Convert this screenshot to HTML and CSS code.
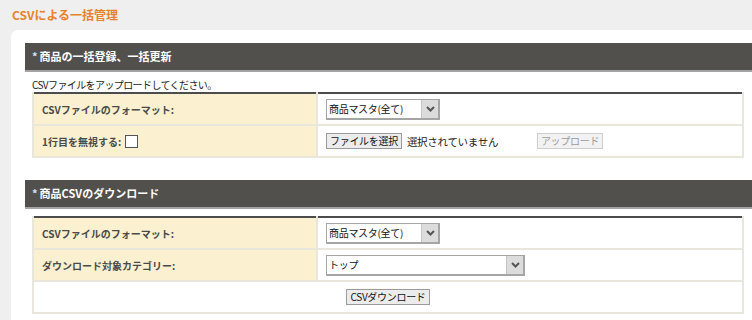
FILE: index.html
```html
<!DOCTYPE html>
<html lang="ja">

<head>
    <meta charset="UTF-8">
    <title>CSVによる一括管理</title>
    <link rel="stylesheet" href="styles.css">
</head>

<body>
    <h1 class="page-title">CSVによる一括管理</h1>

    <div class="panel">
        <div class="section-head"><span class="mark">*</span>商品の一括登録、一括更新</div>
        <div class="section-body">
            <p class="note">CSVファイルをアップロードしてください。</p>
            <table class="form-table">
                <tr>
                    <th>CSVファイルのフォーマット:</th>
                    <td>
                        <div class="select-box w-short">
                            <span class="select-text">商品マスタ(全て)</span>
                            <span class="select-arrow"><svg width="9" height="6" viewBox="0 0 9 6"><path d="M1 1 L4.5 4.5 L8 1" fill="none" stroke="#555" stroke-width="2"/></svg></span>
                        </div>
                    </td>
                </tr>
                <tr>
                    <th>1行目を無視する: <span class="check"></span></th>
                    <td>
                        <div class="file-row">
                            <button class="btn">ファイルを選択</button>
                            <span class="file-name">選択されていません</span>
                            <button class="btn btn-disabled">アップロード</button>
                        </div>
                    </td>
                </tr>
            </table>
        </div>

        <div class="section-head second"><span class="mark">*</span>商品CSVのダウンロード</div>
        <div class="section-body">
            <table class="form-table download">
                <tr>
                    <th>CSVファイルのフォーマット:</th>
                    <td>
                        <div class="select-box w-short">
                            <span class="select-text">商品マスタ(全て)</span>
                            <span class="select-arrow"><svg width="9" height="6" viewBox="0 0 9 6"><path d="M1 1 L4.5 4.5 L8 1" fill="none" stroke="#555" stroke-width="2"/></svg></span>
                        </div>
                    </td>
                </tr>
                <tr>
                    <th>ダウンロード対象カテゴリー:</th>
                    <td>
                        <div class="select-box w-long">
                            <span class="select-text">トップ</span>
                            <span class="select-arrow"><svg width="9" height="6" viewBox="0 0 9 6"><path d="M1 1 L4.5 4.5 L8 1" fill="none" stroke="#555" stroke-width="2"/></svg></span>
                        </div>
                    </td>
                </tr>
                <tr>
                    <td colspan="2" class="center">
                        <button class="btn">CSVダウンロード</button>
                    </td>
                </tr>
            </table>
        </div>
    </div>
</body>

</html>
```

FILE: styles.css
```css
body {
    margin: 0;
    background-color: #efefef;
    font-family: "Noto Sans CJK JP", "Liberation Sans", sans-serif;
    font-size: 10px;
    color: #222;
}

.page-title {
    margin: 0;
    padding: 6px 12px 0;
    height: 24px;
    font-size: 12px;
    font-weight: bold;
    color: #e8822a;
}

.panel {
    margin-left: 11px;
    padding: 13px 0 10px 14px;
    background-color: white;
    border-radius: 7px 0 0 0;
}

.section-head {
    height: 27px;
    line-height: 27px;
    padding-left: 7px;
    background-color: #51504c;
    border-bottom: 2px solid #a3a3a3;
    color: white;
    font-size: 11px;
    font-weight: bold;
}

.section-head.second {
    margin-top: 22px;
}

.mark {
    color: #d6e0f0;
    margin-right: 2px;
}

.section-body {
    padding: 0 8px 0 7px;
}

.note {
    margin: 0;
    padding-top: 5px;
    height: 15px;
    line-height: 15px;
    font-size: 10px;
    letter-spacing: -0.6px;
}

.form-table {
    width: 100%;
    border-collapse: collapse;
    border-top: 2px solid #4c4c4c;
}

.form-table.download {
    margin-top: 7px;
}

.form-table th,
.form-table td {
    height: 30px;
    padding: 0 0 0 8px;
    border: 2px solid #e9e7dc;
    text-align: left;
}

.form-table tr:first-child th,
.form-table tr:first-child td {
    border-top: none;
}

.form-table th {
    width: 274px;
    background-color: #fbf0cf;
    color: #4a4a4a;
    font-weight: bold;
    font-size: 10px;
}

.form-table td.center {
    text-align: center;
    padding: 0;
}

.check {
    display: inline-block;
    width: 11px;
    height: 11px;
    border: 1px solid #555;
    background-color: white;
    vertical-align: -2px;
    margin-left: 2px;
}

.select-box {
    display: flex;
    align-items: stretch;
    height: 18px;
    border: 1px solid #a5a5a5;
    border-right-width: 2px;
    border-bottom-width: 2px;
    background-color: white;
}

.w-short {
    width: 111px;
}

.w-long {
    width: 196px;
}

.select-text {
    flex: 1;
    padding-left: 2px;
    line-height: 18px;
    font-size: 10px;
    letter-spacing: -0.3px;
    color: #111;
}

.select-arrow {
    width: 16px;
    display: flex;
    align-items: center;
    justify-content: center;
    background-color: #dcdcdc;
    border-left: 1px solid #c4c4c4;
}

.file-row {
    display: flex;
    align-items: center;
}

.file-name {
    margin-left: 5px;
    width: 130px;
    font-size: 10.5px;
    letter-spacing: -0.3px;
}

.btn {
    height: 16px;
    padding: 0 3px;
    font-family: "Noto Sans CJK JP", "Liberation Sans", sans-serif;
    font-size: 10px;
    letter-spacing: -0.3px;
    line-height: 14px;
    color: #111;
    background-color: #ececec;
    border: 1px solid #9b9b9b;
    border-radius: 0;
}

.btn-disabled {
    color: #9a9a9a;
    border-color: #cfcfcf;
    background-color: #f2f2f2;
}
```
